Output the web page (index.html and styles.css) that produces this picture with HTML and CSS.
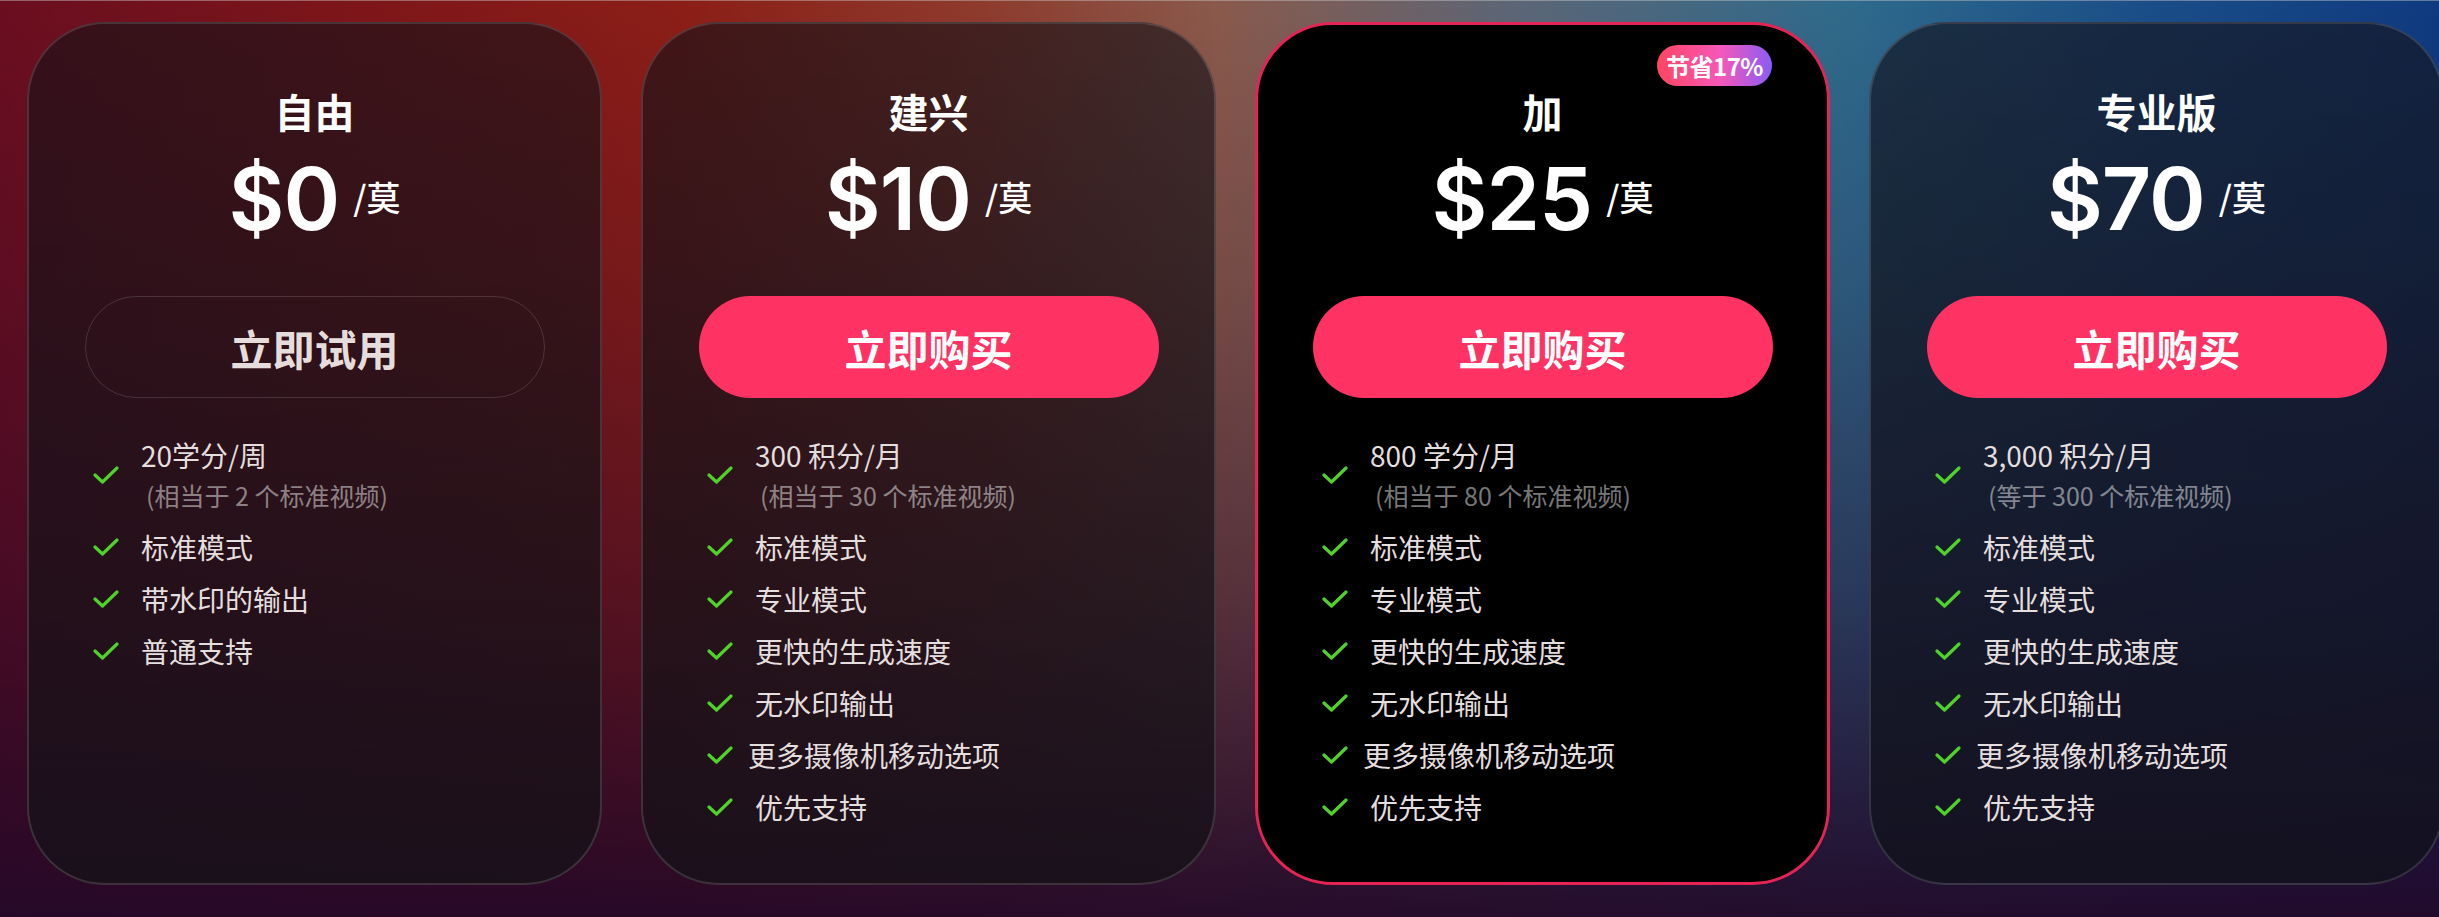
FILE: index.html
```html
<!DOCTYPE html>
<html lang="zh-CN">
<head>
<meta charset="utf-8">
<title>定价</title>
<link rel="stylesheet" href="styles.css">
</head>
<body>
<main class="plans">
  <section class="card">
    <h2 class="plan-name">自由</h2>
    <div class="price"><span class="amount">$0</span><span class="unit">/莫</span></div>
    <button class="btn btn-ghost">立即试用</button>
    <ul class="features">
      <li class="feature"><svg class="check" viewBox="0 0 26 18"><polyline points="2,9 9.5,16 24,2"/></svg><div class="ftext"><div>20学分/周</div><div class="sub">(相当于 2 个标准视频)</div></div></li>
      <li class="feature"><svg class="check" viewBox="0 0 26 18"><polyline points="2,9 9.5,16 24,2"/></svg><div class="ftext">标准模式</div></li>
      <li class="feature"><svg class="check" viewBox="0 0 26 18"><polyline points="2,9 9.5,16 24,2"/></svg><div class="ftext">带水印的输出</div></li>
      <li class="feature"><svg class="check" viewBox="0 0 26 18"><polyline points="2,9 9.5,16 24,2"/></svg><div class="ftext">普通支持</div></li>
    </ul>
  </section>

  <section class="card">
    <h2 class="plan-name">建兴</h2>
    <div class="price"><span class="amount">$10</span><span class="unit">/莫</span></div>
    <button class="btn btn-buy">立即购买</button>
    <ul class="features">
      <li class="feature"><svg class="check" viewBox="0 0 26 18"><polyline points="2,9 9.5,16 24,2"/></svg><div class="ftext"><div>300 积分/月</div><div class="sub">(相当于 30 个标准视频)</div></div></li>
      <li class="feature"><svg class="check" viewBox="0 0 26 18"><polyline points="2,9 9.5,16 24,2"/></svg><div class="ftext">标准模式</div></li>
      <li class="feature"><svg class="check" viewBox="0 0 26 18"><polyline points="2,9 9.5,16 24,2"/></svg><div class="ftext">专业模式</div></li>
      <li class="feature"><svg class="check" viewBox="0 0 26 18"><polyline points="2,9 9.5,16 24,2"/></svg><div class="ftext">更快的生成速度</div></li>
      <li class="feature"><svg class="check" viewBox="0 0 26 18"><polyline points="2,9 9.5,16 24,2"/></svg><div class="ftext">无水印输出</div></li>
      <li class="feature"><svg class="check" viewBox="0 0 26 18"><polyline points="2,9 9.5,16 24,2"/></svg><div class="ftext tight">更多摄像机移动选项</div></li>
      <li class="feature"><svg class="check" viewBox="0 0 26 18"><polyline points="2,9 9.5,16 24,2"/></svg><div class="ftext">优先支持</div></li>
    </ul>
  </section>

  <section class="card card-featured">
    <span class="badge">节省17%</span>
    <h2 class="plan-name">加</h2>
    <div class="price"><span class="amount">$25</span><span class="unit">/莫</span></div>
    <button class="btn btn-buy">立即购买</button>
    <ul class="features">
      <li class="feature"><svg class="check" viewBox="0 0 26 18"><polyline points="2,9 9.5,16 24,2"/></svg><div class="ftext"><div>800 学分/月</div><div class="sub">(相当于 80 个标准视频)</div></div></li>
      <li class="feature"><svg class="check" viewBox="0 0 26 18"><polyline points="2,9 9.5,16 24,2"/></svg><div class="ftext">标准模式</div></li>
      <li class="feature"><svg class="check" viewBox="0 0 26 18"><polyline points="2,9 9.5,16 24,2"/></svg><div class="ftext">专业模式</div></li>
      <li class="feature"><svg class="check" viewBox="0 0 26 18"><polyline points="2,9 9.5,16 24,2"/></svg><div class="ftext">更快的生成速度</div></li>
      <li class="feature"><svg class="check" viewBox="0 0 26 18"><polyline points="2,9 9.5,16 24,2"/></svg><div class="ftext">无水印输出</div></li>
      <li class="feature"><svg class="check" viewBox="0 0 26 18"><polyline points="2,9 9.5,16 24,2"/></svg><div class="ftext tight">更多摄像机移动选项</div></li>
      <li class="feature"><svg class="check" viewBox="0 0 26 18"><polyline points="2,9 9.5,16 24,2"/></svg><div class="ftext">优先支持</div></li>
    </ul>
  </section>

  <section class="card card-pro">
    <h2 class="plan-name">专业版</h2>
    <div class="price"><span class="amount">$70</span><span class="unit">/莫</span></div>
    <button class="btn btn-buy">立即购买</button>
    <ul class="features">
      <li class="feature"><svg class="check" viewBox="0 0 26 18"><polyline points="2,9 9.5,16 24,2"/></svg><div class="ftext"><div>3,000 积分/月</div><div class="sub">(等于 300 个标准视频)</div></div></li>
      <li class="feature"><svg class="check" viewBox="0 0 26 18"><polyline points="2,9 9.5,16 24,2"/></svg><div class="ftext">标准模式</div></li>
      <li class="feature"><svg class="check" viewBox="0 0 26 18"><polyline points="2,9 9.5,16 24,2"/></svg><div class="ftext">专业模式</div></li>
      <li class="feature"><svg class="check" viewBox="0 0 26 18"><polyline points="2,9 9.5,16 24,2"/></svg><div class="ftext">更快的生成速度</div></li>
      <li class="feature"><svg class="check" viewBox="0 0 26 18"><polyline points="2,9 9.5,16 24,2"/></svg><div class="ftext">无水印输出</div></li>
      <li class="feature"><svg class="check" viewBox="0 0 26 18"><polyline points="2,9 9.5,16 24,2"/></svg><div class="ftext tight">更多摄像机移动选项</div></li>
      <li class="feature"><svg class="check" viewBox="0 0 26 18"><polyline points="2,9 9.5,16 24,2"/></svg><div class="ftext">优先支持</div></li>
    </ul>
  </section>
</main>
</body>
</html>
```

FILE: styles.css
```css
html, body {
  margin: 0;
  padding: 0;
}

body {
  width: 2439px;
  height: 917px;
  overflow: hidden;
  box-sizing: border-box;
  border-top: 1px solid rgba(200, 200, 200, 0.45);
  font-family: "Noto Sans CJK SC", "Noto Sans", sans-serif;
  color: #fff;
  background:
    linear-gradient(to bottom,
      rgba(36, 8, 40, 0) 0%,
      rgba(36, 8, 40, 0.18) 30%,
      rgba(36, 8, 40, 0.5) 65%,
      rgba(34, 8, 40, 0.95) 100%),
    linear-gradient(to right,
      #6a0e20 0%,
      #7e1619 15%,
      #8c1e17 28%,
      #8e3a2c 40%,
      #8a5a4c 50%,
      #5c6676 62%,
      #2e6a8c 76%,
      #1a4e88 88%,
      #0f3a80 100%);
}

.plans {
  display: flex;
  gap: 39px;
  padding: 21px 0 0 27px;
}

.card {
  position: relative;
  flex: 0 0 575px;
  height: 863px;
  box-sizing: border-box;
  border: 2px solid rgba(255, 255, 255, 0.14);
  border-radius: 78px;
  background: linear-gradient(to bottom, rgba(22, 18, 24, 0.62), rgba(22, 18, 24, 0.78));
  display: flex;
  flex-direction: column;
  align-items: center;
  padding-top: 65px;
}

.card-featured {
  background: #000;
  border: 3px solid #e32455;
  padding-top: 64px;
}

.card-pro {
  background: linear-gradient(to bottom, rgba(20, 26, 40, 0.72), rgba(18, 18, 30, 0.85));
}

.badge {
  position: absolute;
  top: 20px;
  right: 55px;
  width: 115px;
  height: 41px;
  border-radius: 21px;
  background: linear-gradient(to right, #ff4560 0%, #f558b8 55%, #8a5cf6 100%);
  color: #fff;
  font-size: 24px;
  font-weight: 700;
  line-height: 41px;
  text-align: center;
  letter-spacing: -0.5px;
}

.plan-name {
  margin: 0;
  font-size: 40px;
  line-height: 44px;
  font-weight: 700;
  color: #fff;
}

.price {
  display: flex;
  align-items: center;
  margin-top: 23px;
  height: 86px;
}

.amount {
  font-family: "Inter", "Noto Sans", sans-serif;
  font-weight: 600;
  font-size: 86px;
  line-height: 86px;
  letter-spacing: -1px;
}

.unit {
  margin-left: 14px;
  margin-bottom: 4px;
  font-size: 34px;
  line-height: 40px;
  font-weight: 500;
}

.btn {
  margin-top: 54px;
  width: 460px;
  height: 102px;
  border-radius: 51px;
  font-family: "Noto Sans CJK SC", sans-serif;
  font-size: 42px;
  font-weight: 700;
  cursor: pointer;
}

.btn-ghost {
  background: transparent;
  border: 1px solid rgba(255, 255, 255, 0.14);
  color: #e6dcdc;
}

.btn-buy {
  background: #ff3264;
  border: none;
  color: #fff;
}

.features {
  list-style: none;
  margin: 37px 0 0;
  padding: 0 0 0 64px;
  align-self: stretch;
  display: flex;
  flex-direction: column;
  gap: 12px;
}

.feature {
  display: flex;
  align-items: center;
}

.check {
  width: 26px;
  height: 18px;
  flex: 0 0 26px;
  fill: none;
  stroke: #4fd32a;
  stroke-width: 3.2;
  stroke-linecap: round;
  stroke-linejoin: round;
}

.ftext {
  margin-left: 22px;
  font-size: 28px;
  line-height: 40px;
  color: #e4dede;
}

.ftext.tight {
  margin-left: 15px;
}

.sub {
  padding-left: 5px;
  font-size: 25px;
  color: rgba(255, 255, 255, 0.48);
}
```
